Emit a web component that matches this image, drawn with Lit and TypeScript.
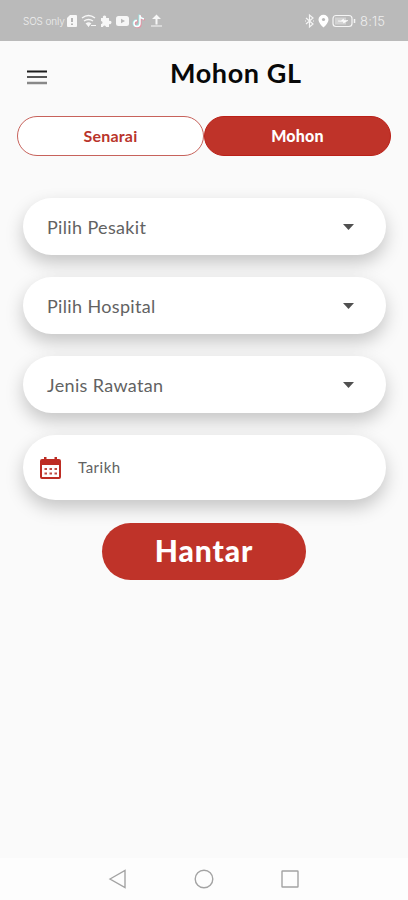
import { LitElement, html, css } from "lit";
import { customElement } from "lit/decorators.js";

@customElement("app-root")
export class AppRoot extends LitElement {
  static styles = css`
    :host { display: flex; flex-direction: column; height: 900px; width: 408px; overflow: hidden; background: #fafafa; font-family: Lato, "Noto Sans", sans-serif; }
    * { box-sizing: border-box; }
    svg { display: block; flex: none; }
    button { font: inherit; border: 0; margin: 0; padding: 0; background: none; }
    .status { height: 41px; flex: none; background: #bababa; color: #eee; display: flex; align-items: center; padding: 1px 22px 0 23px; }
    .carrier { width: 43px; white-space: nowrap; font-family: Inter, sans-serif; font-size: 10px; letter-spacing: -0.15px; font-weight: 300; }
    .spacer { flex: 1; }
    .clock { font-family: Inter, sans-serif; font-size: 13px; font-weight: 300; width: 26px; white-space: nowrap; letter-spacing: .2px; }
    .bar { height: 75px; flex: none; display: grid; grid-template-columns: 143px 1fr; padding-left: 27px; align-items: start; }
    .menu { padding-top: 29px; }
    .title { margin: 0; padding-top: 15px; font-size: 27px; line-height: 34px; font-weight: 700; color: #080808; white-space: nowrap; letter-spacing: 0.6px; }
    .tabs { display: grid; grid-template-columns: 1fr 1fr; margin: 0 17px; height: 40px; flex: none; }
    .tab { border: 1px solid #c7625b; border-radius: 20px; background: #fff; color: #b9342b; font-size: 16px; font-weight: 700; letter-spacing: .2px; padding-bottom: 1px; }
    .tab.on { background: #bf3329; border-color: #bb2018; color: #fff; font-weight: 900; }
    .form { padding: 42px 22px 0 23px; display: flex; flex-direction: column; gap: 22px; }
    .field { height: 57px; border-radius: 29px; background: #fff; box-shadow: 0 8px 18px rgba(0,0,0,.21); display: flex; align-items: center; justify-content: space-between; padding: 0 32px 0 24px; color: #626262; font-size: 18px; letter-spacing: .35px; }
    .date { height: 65px; border-radius: 33px; justify-content: flex-start; gap: 17px; padding: 0 17px; font-size: 15px; letter-spacing: .5px; }
    .date span { padding-bottom: 2px; }
    .send { align-self: center; width: 204px; height: 57px; margin: 1px 1px 0 0; padding-bottom: 3px; border-radius: 29px; background: #bf3329; color: #fff; font-size: 30px; font-weight: 900; letter-spacing: .9px; }
    .nav { margin-top: auto; height: 42px; flex: none; background: #fdfdfd; display: flex; justify-content: center; align-items: center; gap: 66px; }
  `;
  render() {
    return html`
      <div class="status">
        <span class="carrier">SOS only</span>
        <svg width="96" height="16" viewBox="0 0 96 16" fill="#f7f7f7">
          <path d="M4 2h6a1 1 0 0 1 1 1v10a1 1 0 0 1-1 1H2a1 1 0 0 1-1-1V5z"/>
          <path d="M6 5v4M6 10.500v1.500" stroke="#aaa" stroke-width="1.700"/>
          <path d="M16 5q6.500-5 13 0M18 8q4.500-3 9 0M20 11q2.500-2 5 0" fill="none" stroke="#f7f7f7" stroke-width="1.400"/>
          <path d="M21 11h3l-1.500 2.500zM25 12.500h5" stroke="#f7f7f7"/>
          <path d="M35 5h2a1.700 1.700 0 1 1 3 0h3v3a1.700 1.700 0 1 1 0 3v3h-3a1.500 1.500 0 0 0-3 0h-2v-3a1.500 1.500 0 0 0 0-3z"/>
          <rect x="50" y="3" width="13" height="10" rx="2.500"/><path d="M55 5.700v4.600l4-2.300z" fill="#b8b8b8"/>
          <g fill="none" stroke-width="1.700"><path d="M74 2v8.500a3 3 0 1 1-3-3M74 2.500q.5 3 4 3.500" stroke="#e394a5" transform="translate(.8 .8)"/><path d="M74 2v8.500a3 3 0 1 1-3-3M74 2.500q.5 3 4 3.500" stroke="#9ce5e6" transform="translate(-.7 -.4)"/><path d="M74 2v8.500a3 3 0 1 1-3-3M74 2.500q.5 3 4 3.500" stroke="#fff" stroke-width="1.400"/></g>
          <path d="M90.500 1.500l4.500 4.500h-3.500v5.500h-2v-5.500h-3.500zM85 12.500h11v1H85z"/>
        </svg>
        <span class="spacer"></span>
        <svg width="56" height="16" viewBox="0 0 56 16" fill="none" stroke="#f5f5f5" stroke-width="1.200">
          <path d="M2 5l7 6-3.500 3V2L9 5l-7 6M1 8h1M9 8h1"/>
          <path d="M19.500 1.700a5 5 0 0 0-5 5c0 3.300 5 7.800 5 7.800s5-4.500 5-7.800a5 5 0 0 0-5-5z" fill="#fff" stroke="none"/><circle cx="19.500" cy="6.500" r="1.600" fill="#b8b8b8" stroke="none"/>
          <rect x="29" y="2.500" width="19" height="11" rx="3"/><path d="M50.500 6v4" stroke-width="1.500"/>
          <path d="M31 4.500h11v7H31z" fill="#d2d2d2" stroke="none"/><path d="M34 8h3l2.500-2v1.500H44L39.500 10V8.500z" fill="#fff" stroke="#fff" stroke-width=".5"/>
        </svg>
        <span class="clock">8:15</span>
      </div>
      <header class="bar">
        <button class="menu" aria-label="Menu"><svg width="20" height="16" viewBox="0 0 20 16"><path d="M0 1.500h20" stroke="#1c1c1c" stroke-width="2"/><path d="M0 7h20" stroke="#555" stroke-width="2"/><path d="M0 13h20" stroke="#888" stroke-width="2.500"/></svg></button>
        <h1 class="title">Mohon GL</h1>
      </header>
      <div class="tabs"><button class="tab">Senarai</button><button class="tab on">Mohon</button></div>
      <div class="form">
        ${["Pilih Pesakit", "Pilih Hospital", "Jenis Rawatan"].map((label) => html`
          <div class="field"><span>${label}</span><svg width="11" height="6" viewBox="0 0 11 6"><path d="M0 0h11L5.500 6z" fill="#505050"/></svg></div>`)}
        <div class="field date">
          <svg width="21" height="24" viewBox="0 0 21 24"><path d="M2 3h2V1h2.500v2h8V1H17v2h2a2 2 0 0 1 2 2v16a2 2 0 0 1-2 2H2a2 2 0 0 1-2-2V5a2 2 0 0 1 2-2z" fill="#bd2d24"/><path d="M2 9h17v12H2z" fill="#fff"/><path d="M4.500 12h2.500v2H4.500zM9.500 12h2.500v2H9.500zM14.500 12h2.500v2h-2.500zM4.500 16.500h2.500v2H4.500zM9.500 16.500h2.500v2H9.500zM14.500 16.500h2.500v2h-2.500z" fill="#bd4a42"/></svg>
          <span>Tarikh</span>
        </div>
        <button class="send">Hantar</button>
      </div>
      <nav class="nav">
        <svg width="20" height="20" viewBox="0 0 20 20" fill="none" stroke="#a3a3a3" stroke-width="1.400"><path d="M2 10L17 1.500v17z"/></svg>
        <svg width="20" height="20" viewBox="0 0 20 20" fill="none" stroke="#a3a3a3" stroke-width="1.400"><circle cx="10" cy="10" r="8.800"/></svg>
        <svg width="20" height="20" viewBox="0 0 20 20" fill="none" stroke="#a3a3a3" stroke-width="1.400"><rect x="2" y="2" width="16" height="16" rx=".5"/></svg>
      </nav>`;
  }
}
